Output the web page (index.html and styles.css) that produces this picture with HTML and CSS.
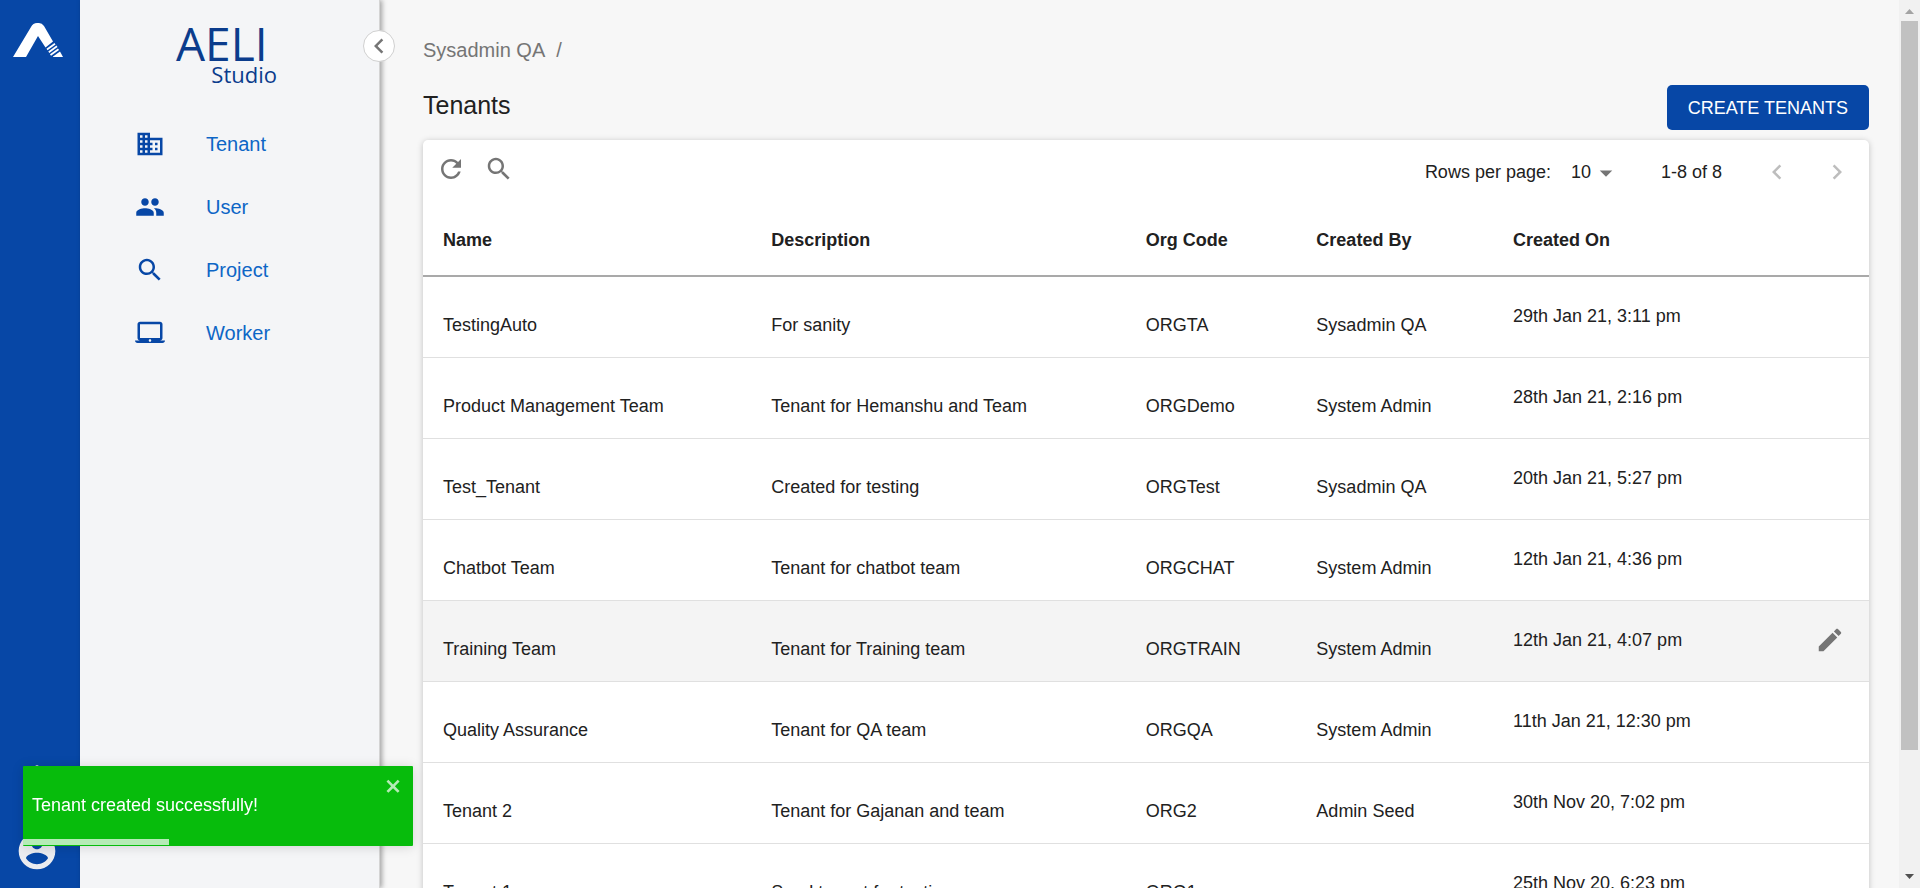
FILE: index.html
```html
<!DOCTYPE html>
<html lang="en">
<head>
<meta charset="utf-8">
<title>AELI Studio - Tenants</title>
<link rel="stylesheet" href="styles.css">
</head>
<body>
<div class="app">
  <div class="rail">
    <svg class="rail-logo" viewBox="0 0 50 34" aria-hidden="true">
      <path fill="#fff" d="M0 34L18 4Q20 0 24 0H26Q29 0 31 3L40 18.500L32.500 24.500L25 13L13 34Z"/>
      <path stroke="#fff" stroke-width="1.800" d="M34 26.500L42 20.800M35.800 29.200L44 23.300M37.500 32L45.500 26.200"/>
      <path fill="#fff" d="M40 33.500L47 28.500L50 34H40Z"/>
    </svg>
    <div class="rail-bottom">
      <button class="icon-btn" type="button" aria-label="Notifications"><svg class="bell" viewBox="0 0 24 24"><path d="M12 22c1.100 0 2-.9 2-2h-4c0 1.100.89 2 2 2zm6-6v-5c0-3.070-1.640-5.640-4.500-6.320V4c0-.83-.67-1.500-1.500-1.500s-1.500.67-1.500 1.500v.68C7.630 5.360 6 7.920 6 11v5l-2 2v1h16v-1l-2-2z"/></svg></button>
      <button class="icon-btn" type="button" aria-label="Account"><svg class="account" viewBox="0 0 24 24"><path d="M12 2C6.480 2 2 6.480 2 12s4.480 10 10 10 10-4.480 10-10S17.520 2 12 2zm0 3c1.660 0 3 1.340 3 3s-1.340 3-3 3-3-1.340-3-3 1.340-3 3-3zm0 14.200c-2.500 0-4.710-1.280-6-3.220.03-1.990 4-3.080 6-3.080 1.990 0 5.970 1.090 6 3.080-1.290 1.940-3.500 3.220-6 3.220z"/></svg></button>
    </div>
  </div>

  <aside class="sidebar">
    <div class="brand"><div class="brand-name">AELI</div><div class="brand-sub">Studio</div></div>
    <button class="collapse icon-btn" type="button" aria-label="Collapse menu"><svg class="icon" viewBox="0 0 24 24"><path d="M15.410 7.410L14 6l-6 6 6 6 1.410-1.410L10.830 12z"/></svg></button>
    <nav class="nav">
      <a class="nav-item" href="#tenant"><svg class="icon" viewBox="0 0 24 24"><path d="M12 7V3H2v18h20V7H12zM6 19H4v-2h2v2zm0-4H4v-2h2v2zm0-4H4V9h2v2zm0-4H4V5h2v2zm4 12H8v-2h2v2zm0-4H8v-2h2v2zm0-4H8V9h2v2zm0-4H8V5h2v2zm10 12h-8v-2h2v-2h-2v-2h2v-2h-2V9h8v10zm-2-8h-2v2h2v-2zm0 4h-2v2h2v-2z"/></svg>Tenant</a>
      <a class="nav-item" href="#user"><svg class="icon" viewBox="0 0 24 24"><path d="M16 11c1.660 0 2.990-1.340 2.990-3S17.660 5 16 5c-1.660 0-3 1.340-3 3s1.340 3 3 3zm-8 0c1.660 0 2.990-1.340 2.990-3S9.660 5 8 5C6.340 5 5 6.340 5 8s1.340 3 3 3zm0 2c-2.330 0-7 1.170-7 3.500V19h14v-2.500c0-2.330-4.670-3.500-7-3.500zm8 0c-.29 0-.62.02-.97.05 1.160.84 1.970 1.970 1.970 3.450V19h6v-2.500c0-2.330-4.670-3.500-7-3.500z"/></svg>User</a>
      <a class="nav-item" href="#project"><svg class="icon" viewBox="0 0 24 24"><path d="M15.500 14h-.79l-.28-.27C15.410 12.590 16 11.110 16 9.500 16 5.910 13.090 3 9.500 3S3 5.910 3 9.500 5.910 16 9.500 16c1.610 0 3.090-.59 4.230-1.570l.27.28v.79l5 4.990L20.490 19l-4.990-5zm-6 0C7.010 14 5 11.990 5 9.500S7.010 5 9.500 5 14 7.010 14 9.500 11.990 14 9.500 14z"/></svg>Project</a>
      <a class="nav-item" href="#worker"><svg class="icon" viewBox="0 0 24 24"><path d="M20 18c1.100 0 1.990-.9 1.990-2L22 5c0-1.100-.9-2-2-2H4c-1.100 0-2 .9-2 2v11c0 1.100.9 2 2 2H0c0 1.100.9 2 2 2h20c1.100 0 2-.9 2-2h-4zM4 5h16v11H4V5zm8 14c-.55 0-1-.45-1-1s.45-1 1-1 1 .45 1 1-.45 1-1 1z"/></svg>Worker</a>
    </nav>
  </aside>

  <main class="main">
    <nav class="crumbs" aria-label="Breadcrumb"><a href="#home">Sysadmin QA</a><span>/</span></nav>
    <header class="page-head">
      <h1>Tenants</h1>
      <button class="primary" type="button">CREATE TENANTS</button>
    </header>
    <section class="card">
      <div class="toolbar">
        <div class="tools">
          <button class="icon-btn" type="button" aria-label="Refresh"><svg class="icon" viewBox="0 0 24 24"><path d="M17.650 6.350C16.200 4.900 14.210 4 12 4c-4.420 0-7.990 3.580-7.990 8s3.570 8 7.990 8c3.730 0 6.840-2.550 7.730-6h-2.080c-.82 2.330-3.040 4-5.650 4-3.310 0-6-2.690-6-6s2.690-6 6-6c1.660 0 3.140.69 4.220 1.780L13 11h7V4l-2.350 2.350z"/></svg></button>
          <button class="icon-btn" type="button" aria-label="Search"><svg class="icon" viewBox="0 0 24 24"><path d="M15.500 14h-.79l-.28-.27C15.410 12.590 16 11.110 16 9.500 16 5.910 13.090 3 9.500 3S3 5.910 3 9.500 5.910 16 9.500 16c1.610 0 3.090-.59 4.230-1.570l.27.28v.79l5 4.990L20.490 19l-4.990-5zm-6 0C7.010 14 5 11.990 5 9.500S7.010 5 9.500 5 14 7.010 14 9.500 11.990 14 9.500 14z"/></svg></button>
        </div>
        <div class="pager">
          <label for="rows">Rows per page:</label>
          <span class="select-wrap">
            <select id="rows"><option>10</option><option>25</option><option>50</option></select>
            <svg class="icon caret" viewBox="0 0 24 24" aria-hidden="true"><path d="M7 10l5 5 5-5z"/></svg>
          </span>
          <span class="range">1-8 of 8</span>
          <button class="icon-btn page-btn" type="button" disabled aria-label="Previous page"><svg class="icon" viewBox="0 0 24 24"><path d="M15.410 7.410L14 6l-6 6 6 6 1.410-1.410L10.830 12z"/></svg></button>
          <button class="icon-btn page-btn" type="button" disabled aria-label="Next page"><svg class="icon" viewBox="0 0 24 24"><path d="M10 6L8.590 7.410 13.170 12l-4.580 4.590L10 18l6-6z"/></svg></button>
        </div>
      </div>
      <table class="grid">
        <colgroup><col class="c-name"><col class="c-desc"><col class="c-code"><col class="c-by"><col><col class="c-act"></colgroup>
        <thead><tr><th>Name</th><th>Description</th><th>Org Code</th><th>Created By</th><th>Created On</th><th></th></tr></thead>
        <tbody>
          <tr><td>TestingAuto</td><td>For sanity</td><td>ORGTA</td><td>Sysadmin QA</td><td class="date">29th Jan 21, 3:11 pm</td><td></td></tr>
          <tr><td>Product Management Team</td><td>Tenant for Hemanshu and Team</td><td>ORGDemo</td><td>System Admin</td><td class="date">28th Jan 21, 2:16 pm</td><td></td></tr>
          <tr><td>Test_Tenant</td><td>Created for testing</td><td>ORGTest</td><td>Sysadmin QA</td><td class="date">20th Jan 21, 5:27 pm</td><td></td></tr>
          <tr><td>Chatbot Team</td><td>Tenant for chatbot team</td><td>ORGCHAT</td><td>System Admin</td><td class="date">12th Jan 21, 4:36 pm</td><td></td></tr>
          <tr class="active"><td>Training Team</td><td>Tenant for Training team</td><td>ORGTRAIN</td><td>System Admin</td><td class="date">12th Jan 21, 4:07 pm</td><td class="act"><button class="icon-btn" type="button" aria-label="Edit Training Team"><svg class="icon" viewBox="0 0 24 24"><path d="M3 17.250V21h3.750L17.810 9.940l-3.750-3.750L3 17.250zM20.710 7.040c.39-.39.39-1.020 0-1.410l-2.340-2.340c-.39-.39-1.020-.39-1.410 0l-1.830 1.830 3.750 3.750 1.830-1.830z"/></svg></button></td></tr>
          <tr><td>Quality Assurance</td><td>Tenant for QA team</td><td>ORGQA</td><td>System Admin</td><td class="date">11th Jan 21, 12:30 pm</td><td></td></tr>
          <tr><td>Tenant 2</td><td>Tenant for Gajanan and team</td><td>ORG2</td><td>Admin Seed</td><td class="date">30th Nov 20, 7:02 pm</td><td></td></tr>
          <tr><td>Tenant 1</td><td>Seed tenant for testing</td><td>ORG1</td><td></td><td class="date">25th Nov 20, 6:23 pm</td><td></td></tr>
        </tbody>
      </table>
    </section>
  </main>

  <div class="scrollbar" aria-hidden="true">
    <svg class="sb-arrow" viewBox="0 0 21 21"><path fill="#a3a3a3" d="M6 14l4.500-5 4.500 5z"/></svg>
    <div class="sb-track"><div class="sb-thumb"></div></div>
    <svg class="sb-arrow" viewBox="0 0 21 21"><path fill="#505050" d="M6 7l4.500 5L15 7z"/></svg>
  </div>
</div>

<div class="toast" role="alert">
  <div class="toast-text">Tenant created successfully!</div>
  <button class="toast-close" type="button" aria-label="Close"><svg viewBox="0 0 14 16"><path fill-rule="evenodd" d="M7.710 8.230l3.750 3.750-1.480 1.480-3.750-3.750-3.750 3.750L1 11.980l3.750-3.750L1 4.480 2.480 3l3.750 3.750L9.980 3l1.480 1.480-3.750 3.750z"/></svg></button>
  <div class="toast-progress"></div>
</div>
</body>
</html>
```

FILE: styles.css
```css
* { box-sizing: border-box; }
html, body { height: 100%; }
body {
  margin: 0;
  overflow: hidden;
  font-family: "Liberation Sans", Arial, sans-serif;
  font-size: 18px;
  line-height: 24px;
  color: #212121;
  background: #f7f7f7;
}
.app { display: flex; height: 100vh; }
.icon { display: block; width: 30px; height: 30px; fill: currentColor; }
.icon-btn { display: block; padding: 0; border: 0; background: none; color: #757575; }

.rail {
  flex: none;
  width: 80px;
  display: flex;
  flex-direction: column;
  justify-content: space-between;
  padding: 23px 12px 15px 13px;
  background: #0747a6;
}
.rail-logo { width: 50px; height: 34px; fill: none; }
.rail-bottom { display: flex; flex-direction: column; align-items: center; gap: 28px; padding-right: 7px; }
.rail-bottom svg { display: block; width: 44px; height: 44px; fill: #ebecf0; }
.rail-bottom .bell { width: 40px; height: 40px; }

.sidebar {
  position: relative;
  z-index: 1;
  flex: none;
  width: 300px;
  background: #f4f5f7;
  border-right: 1px solid #d4d4d4;
  box-shadow: 2px 0 5px rgba(0, 0, 0, .35);
}
.brand {
  display: flex;
  flex-direction: column;
  width: 197px;
  padding-top: 21px;
  padding-left: 96px;
  color: #0b3c8c;
  font-family: "Open Sans", sans-serif;
}
.brand-name { font-size: 46px; line-height: 44px; }
.brand-sub { align-self: flex-end; font-size: 22px; line-height: 18px; }
.collapse {
  position: absolute;
  top: 30px;
  right: -16px;
  width: 32px;
  height: 32px;
  border: 1px solid #d0d0d0;
  border-radius: 50%;
  background: #fff;
}
.nav { display: flex; flex-direction: column; gap: 1px; margin-top: 30px; }
.nav-item {
  display: flex;
  align-items: center;
  gap: 41px;
  height: 62px;
  padding-left: 55px;
  font-size: 20px;
  color: #0d66c6;
  text-decoration: none;
}
.nav-item .icon { color: #0747a6; }

.main { flex: 1; min-width: 0; padding: 38px 30px 30px 43px; overflow: hidden; }
.crumbs { display: flex; gap: 11px; font-size: 20px; color: #757575; }
.crumbs a { color: inherit; text-decoration: none; }
.page-head { display: flex; justify-content: space-between; margin: 23px 0 10px; }
.page-head h1 { margin: 4px 0 0; font-size: 25px; line-height: 32px; font-weight: 400; }
.primary {
  height: 45px;
  padding: 0 21px;
  border: 0;
  border-radius: 5px;
  background: #0747a6;
  color: #fff;
  font: inherit;
}

.card {
  background: #fff;
  border-radius: 5px;
  box-shadow: 0 1px 6px rgba(0, 0, 0, .22);
}
.toolbar { display: flex; justify-content: space-between; height: 64px; }
.tools { display: flex; gap: 18px; padding: 14px 0 0 13px; height: 44px; }
.pager { display: flex; align-items: center; padding-right: 17px; }
.select-wrap { position: relative; margin-left: 20px; }
.select-wrap select {
  display: block;
  width: 50px;
  padding: 0;
  border: 0;
  appearance: none;
  background: none;
  color: inherit;
  font: inherit;
}
.caret { position: absolute; top: -2px; right: 0; color: #757575; pointer-events: none; }
.range { margin: 0 40px; }
.page-btn { color: #bdbdbd; }
.page-btn + .page-btn { margin-left: 30px; }

.grid { width: 100%; table-layout: fixed; border-collapse: separate; border-spacing: 0; }
.c-name { width: 22.7%; }
.c-desc { width: 25.9%; }
.c-code { width: 11.8%; }
.c-by { width: 13.6%; }
.c-act { width: 70px; }
.grid th {
  height: 73px;
  padding: 0 20px;
  border-bottom: 2px solid #a9a9a9;
  text-align: left;
  font-weight: 700;
}
.grid td {
  height: 81px;
  padding: 16px 20px 0;
  border-bottom: 1px solid #e0e0e0;
  white-space: nowrap;
}
.grid .date { padding: 0 20px 2px; }
.grid .act { padding: 0 16px 2px; }
.active td { background: #f4f4f4; }

.scrollbar {
  flex: none;
  width: 21px;
  display: flex;
  flex-direction: column;
  background: #f1f1f1;
}
.sb-arrow { display: block; flex: none; width: 21px; height: 21px; }
.sb-track { flex: 1; padding: 0 2px; }
.sb-thumb { height: 86.2%; background: #c1c1c1; }

.toast {
  position: fixed;
  z-index: 2;
  left: 23px;
  bottom: 42px;
  display: flex;
  justify-content: space-between;
  width: 390px;
  height: 80px;
  padding: 10px 10px 12px 9px;
  border-radius: 1px;
  background: #07bc0c;
  color: #fff;
  box-shadow: 0 1px 12px rgba(0, 0, 0, .15);
}
.toast-text { align-self: center; }
.toast-close { align-self: flex-start; padding: 0; border: 0; background: none; opacity: .7; }
.toast-close svg { display: block; width: 18px; height: 20px; fill: #fff; }
.toast-progress { position: absolute; left: 0; bottom: 1px; width: 146px; height: 6px; background: rgba(255, 255, 255, .7); }
```
